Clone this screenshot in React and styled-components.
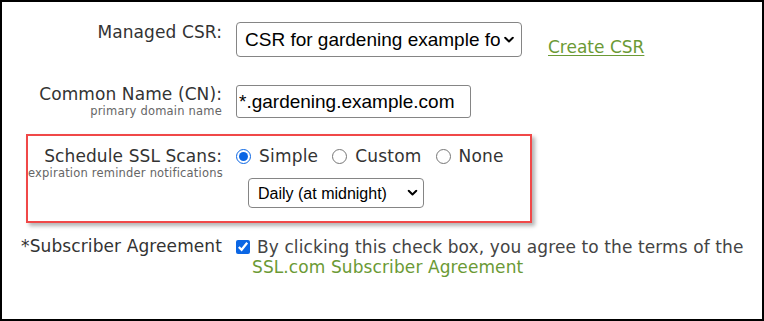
import React from "react";
import styled, { createGlobalStyle } from "styled-components";

const GlobalStyle = createGlobalStyle`
  html, body {
    margin: 0;
    padding: 0;
    background: #fff;
  }
  body {
    font-family: "DejaVu Sans", "Liberation Sans", sans-serif;
    color: #333;
  }
`;

const Frame = styled.div`
  box-sizing: border-box;
  width: 764px;
  height: 321px;
  border: 2px solid #000;
  padding-top: 20px;
  background: #fff;
`;

const Row = styled.div`
  display: grid;
  grid-template-columns: ${(p) => p.$labelWidth || 220}px 1fr;
  column-gap: 14px;
  align-items: start;
  margin-top: ${(p) => p.$top || 0}px;
`;

const Label = styled.div`
  text-align: right;
  font-size: 17px;
  line-height: 20px;
  letter-spacing: 0.1px;
  color: #333;
  margin-top: ${(p) => p.$shift || 0}px;
  white-space: nowrap;
`;

const Hint = styled.div`
  text-align: right;
  font-size: 11.5px;
  line-height: 14px;
  color: #666;
  letter-spacing: 0.2px;
  white-space: nowrap;
`;

const Field = styled.div`
  display: flex;
  align-items: ${(p) => p.$align || "flex-start"};
  gap: ${(p) => p.$gap || 0}px;
`;

const SelectWrap = styled.span`
  position: relative;
  display: inline-block;
  align-self: flex-start;
  margin-left: ${(p) => p.$left || 0}px;
`;

const Select = styled.select`
  appearance: none;
  display: block;
  box-sizing: border-box;
  width: ${(p) => p.$w}px;
  height: ${(p) => p.$h}px;
  border: 1px solid #858585;
  border-radius: 4px;
  background: #fff;
  color: #000;
  font-family: "Liberation Sans", Arial, sans-serif;
  font-size: ${(p) => p.$size}px;
  padding: 0 ${(p) => p.$padRight}px 0 ${(p) => p.$padLeft}px;
  outline: none;
`;

const Chevron = styled.svg`
  position: absolute;
  right: ${(p) => p.$right}px;
  top: 50%;
  transform: translateY(-50%);
  pointer-events: none;
  background: #fff;
`;

const TextInput = styled.input`
  box-sizing: border-box;
  width: 235px;
  height: 33px;
  border: 1px solid #858585;
  border-radius: 3px;
  padding: 0 2px;
  font-family: "Liberation Sans", Arial, sans-serif;
  font-size: 19px;
  color: #000;
  outline: none;
`;

const Link = styled.a`
  color: #6b9a35;
  font-size: ${(p) => p.$size || 17}px;
  line-height: 20px;
  text-decoration: ${(p) => (p.$underline ? "underline" : "none")};
  text-underline-offset: 2px;
  cursor: pointer;
`;

const Highlight = styled.div`
  box-sizing: border-box;
  width: 506px;
  height: 89px;
  margin: 16px 0 0 24px;
  border: 2px solid #f04848;
  box-shadow: 3px 3px 4px rgba(0, 0, 0, 0.3);
  padding: 10px 0 0;
`;

const Radios = styled.div`
  display: flex;
  align-items: center;
  gap: 14px;
  height: 20px;
`;

const RadioLabel = styled.label`
  display: flex;
  align-items: center;
  gap: 8px;
  font-size: 17px;
  line-height: 20px;
  letter-spacing: 0.2px;
  color: #333;
`;

const Radio = styled.input`
  width: 15px;
  height: 15px;
  margin: 0;
  accent-color: #0b66e4;
`;

const Stack = styled.div`
  display: flex;
  flex-direction: column;
  gap: ${(p) => p.$gap || 0}px;
`;

const Agree = styled.div`
  font-size: 17px;
  line-height: 20px;
  letter-spacing: 0.1px;
  color: #444;
  padding-left: 16px;
  text-indent: -16px;
  margin-top: 1px;
`;

const Check = styled.input`
  width: 14px;
  height: 14px;
  margin: 0 7px 0 0;
  vertical-align: -1px;
  accent-color: #0b66e4;
`;

function ChevronIcon({ right, w }) {
  return (
    <Chevron $right={right} width={w} height={7} viewBox="0 0 10 7">
      <path d="M1.2 1.3 L5 5 L8.8 1.3" fill="none" stroke="#000" strokeWidth="2" strokeLinecap="round" strokeLinejoin="round" />
    </Chevron>
  );
}

export default function App() {
  return (
    <>
      <GlobalStyle />
      <Frame>
        <Row $labelWidth={220}>
          <Label $shift={0}>Managed CSR:</Label>
          <Field $gap={26} $align="flex-end">
            <SelectWrap>
              <Select $w={286} $h={35} $size={19} $padLeft={8} $padRight={21} defaultValue="a">
                <option value="a">CSR for gardening example for wildcard</option>
              </Select>
              <ChevronIcon right={8} w={10} />
            </SelectWrap>
            <Link $underline $size={17}>Create CSR</Link>
          </Field>
        </Row>

        <Row $labelWidth={220} $top={28}>
          <Stack>
            <Label $shift={-1}>Common Name (CN):</Label>
            <Hint>primary domain name</Hint>
          </Stack>
          <Field>
            <TextInput defaultValue="*.gardening.example.com" />
          </Field>
        </Row>

        <Highlight>
          <Row $labelWidth={194}>
            <Stack>
              <Label>Schedule SSL Scans:</Label>
              <Hint>expiration reminder notifications</Hint>
            </Stack>
            <Stack $gap={12}>
              <Radios>
                <RadioLabel>
                  <Radio type="radio" name="scan" defaultChecked />
                  Simple
                </RadioLabel>
                <RadioLabel>
                  <Radio type="radio" name="scan" />
                  Custom
                </RadioLabel>
                <RadioLabel>
                  <Radio type="radio" name="scan" />
                  None
                </RadioLabel>
              </Radios>
              <SelectWrap $left={12}>
                <Select $w={176} $h={30} $size={16} $padLeft={9} $padRight={24} defaultValue="daily">
                  <option value="daily">Daily (at midnight)</option>
                </Select>
                <ChevronIcon right={6} w={11} />
              </SelectWrap>
            </Stack>
          </Row>
        </Highlight>

        <Row $labelWidth={220} $top={13}>
          <Label>*Subscriber Agreement</Label>
          <Agree>
            <Check type="checkbox" defaultChecked />
            By clicking this check box, you agree to the terms of the{" "}
            <Link>SSL.com Subscriber Agreement</Link>
          </Agree>
        </Row>
      </Frame>
    </>
  );
}
